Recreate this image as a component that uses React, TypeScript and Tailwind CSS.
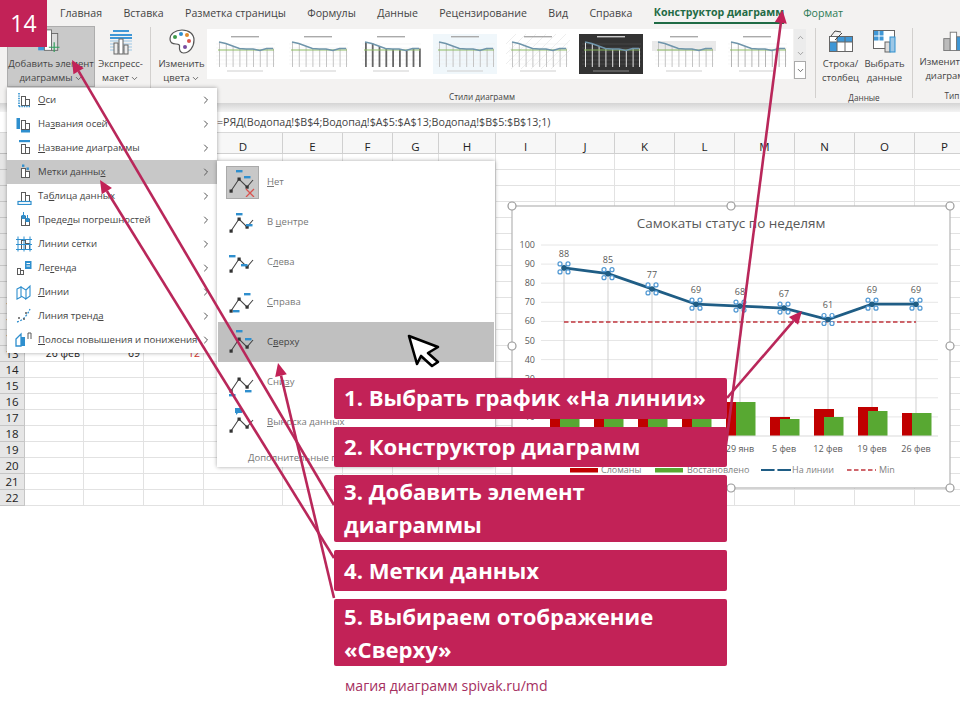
import { ChevronDown, ChevronRight, ChevronUp } from "lucide-react";

const BLUE = "#2f8fce";
const DARK = "#5a5a5a";

const tabs = ["Главная", "Вставка", "Разметка страницы", "Формулы", "Данные", "Рецензирование", "Вид", "Справка"];
const cols = ["A", "B", "C", "D", "E", "F", "G", "H", "I", "J", "K", "L", "M", "N", "O", "P"];
const rows = Array.from({ length: 22 }, (_, i) => i + 1);

function Bars() {
  return (
    <g fill="#fff" stroke={DARK} strokeWidth="1">
      <rect x="6.5" y="5.5" width="4" height="9" />
      <rect x="10.5" y="8.5" width="4" height="6" />
    </g>
  );
}

function MenuIcon({ kind }: { kind: number }) {
  return (
    <svg width="18" height="18" viewBox="0 0 18 18" fill="none">
      {kind !== 8 && kind !== 9 && kind !== 10 && kind !== 7 && <Bars />}
      {kind === 0 && (
        <g stroke={BLUE} strokeWidth="1.6" strokeDasharray="1.4 1">
          <path d="M4 2v14M4 15.5h12" />
        </g>
      )}
      {kind === 1 && (
        <g fill={BLUE}>
          <rect x="1.5" y="3" width="3.5" height="11" />
          <rect x="6" y="15" width="9" height="2.5" />
        </g>
      )}
      {kind === 2 && <rect x="4" y="1" width="11" height="2.2" fill={BLUE} />}
      {kind === 3 && (
        <g fill={BLUE}>
          <rect x="7" y="1.5" width="2.4" height="2.4" />
          <rect x="11.5" y="4.5" width="2.4" height="2.4" />
        </g>
      )}
      {kind === 4 && <rect x="3" y="14.5" width="13" height="3" fill="#fff" stroke={BLUE} strokeWidth="1.2" />}
      {kind === 5 && (
        <g fill={BLUE}>
          <rect x="6.5" y="4" width="4" height="4" />
          <rect x="10.5" y="7" width="4" height="4" />
          <path d="M8.5 1v4M12.5 4v4" stroke={BLUE} />
        </g>
      )}
      {kind === 6 && (
        <path d="M1 4.5h16M1 9.5h16M1 14.5h16M3 1.5v15M9 1.5v15M15 1.5v15" stroke={BLUE} strokeWidth="1" />
      )}
      {kind === 7 && (
        <g>
          <rect x="2.5" y="9.5" width="3" height="6" fill="#fff" stroke={DARK} />
          <rect x="5.5" y="11.5" width="3" height="4" fill="#fff" stroke={DARK} />
          <rect x="10" y="2" width="6.5" height="8" fill={BLUE} />
          <path d="M11.5 4.5h3.5M11.5 7h3.5" stroke="#fff" />
        </g>
      )}
      {kind === 8 && (
        <g stroke={BLUE} strokeWidth="1.1">
          <path d="M2 6l4-2v10l-4 2zM6 4l5 3v9l-5-3zM11 7l4-4v10l-4 3z" />
        </g>
      )}
      {kind === 9 && (
        <g>
          <path d="M2 15c5-1 10-6 13-13" stroke={BLUE} strokeWidth="1.3" strokeDasharray="2 1.5" />
          <g fill={DARK}>
            <circle cx="4" cy="11" r="1" />
            <circle cx="9" cy="12" r="1" />
            <circle cx="11" cy="6" r="1" />
          </g>
        </g>
      )}
      {kind === 10 && (
        <g>
          <path d="M1 8l5-5v12H1z" fill="#fff" stroke={BLUE} strokeWidth="1.3" />
          <rect x="6" y="6" width="4" height="9" fill={BLUE} />
          <path d="M13 8V2l3 0v6" stroke={DARK} strokeWidth="1" />
        </g>
      )}
    </svg>
  );
}

function LabelIcon({ kind }: { kind: number }) {
  const d: Record<number, number[][]> = {
    0: [[8, 3], [16, 9]],
    1: [[8, 6], [18, 17]],
    2: [[1, 8], [13, 17]],
    3: [[16, 6], [5, 23]],
    4: [[8, 3], [17, 11]],
    5: [[1, 27], [17, 23]],
    6: [],
  };
  return (
    <svg width="30" height="30" viewBox="0 0 30 30" fill="none">
      <polyline points="3,24 11,12 19,20 25,13" stroke="#444" strokeWidth="1.1" />
      <g fill="#333">
        <rect x="1.5" y="22.5" width="3.2" height="3.2" />
        <rect x="9.5" y="10.5" width="3.2" height="3.2" />
        <rect x="17.5" y="18.5" width="3.2" height="3.2" />
      </g>
      {d[kind].map((p, i) => (
        <rect key={i} x={p[0]} y={p[1]} width="6.5" height="2.4" fill={BLUE} />
      ))}
      {kind === 6 && <path d="M7 1h7v5h-4l-2 2v-2H7z" fill={BLUE} />}
      {kind === 0 && <path d="M18 22l8 8M26 22l-8 8" stroke="#d9534f" strokeWidth="1.3" />}
    </svg>
  );
}

const thumbs = [0, 0, 1, 2, 3, 4, 5, 6];

function Thumb({ v }: { v: number }) {
  const dark = v === 4;
  const bars = v === 1 ? "#666" : dark ? "#e4e4e4" : v === 6 ? "#b5b5b5" : "#c4c4c4";
  const xs = [6, 12.8, 19.6, 26.4, 33.2, 40, 46.8, 53.6, 60];
  const ys = [8, 9.5, 12, 14.5, 15, 15, 16.5, 14.5, 14.5];
  return (
    <svg width="64" height="40" viewBox="0 0 64 40" className="shrink-0 blur-[0.4px]">
      <rect width="64" height="40" fill={dark ? "#333" : v === 2 ? "#f0f7fb" : "#fff"} />
      {v === 3 && <path d="M0 10L10 0M0 20L20 0M0 30L30 0M5 35L40 0M15 35L50 0M25 35L60 0M35 35L64 6M45 35L64 16" stroke="#e6e6e6" strokeWidth="0.7" />}
      {v === 5 && <rect y="7" width="64" height="10" fill="#e9e9e9" />}
      {[10, 14, 18, 22, 26, 30].map((y) => (
        <path key={y} d={`M3 ${y}H62`} stroke={dark ? "#555" : "#f0f0f0"} strokeWidth="0.6" />
      ))}
      <rect x="18" y="2" width="28" height="1.4" fill={dark ? "#ccc" : "#aaa"} />
      {xs.map((x, i) => (
        <rect key={i} x={x} y={ys[i]} width={v === 1 ? 1.8 : 1} height={33 - ys[i]} fill={bars} />
      ))}
      <path d="M5 16H61" stroke="#8dbb62" strokeWidth="1" />
      <polyline points={xs.map((x, i) => `${x},${ys[i]}`).join(" ")} fill="none" stroke="#6f95ab" strokeWidth="1.5" />
      <rect x="14" y="36.5" width="36" height="1" fill={dark ? "#888" : "#cfcfcf"} />
    </svg>
  );
}

function Arrow({ x1, y1, x2, y2 }: { x1: number; y1: number; x2: number; y2: number }) {
  const len = Math.hypot(x2 - x1, y2 - y1);
  const ux = (x2 - x1) / len;
  const uy = (y2 - y1) / len;
  const bx = x2 - ux * 13;
  const by = y2 - uy * 13;
  const pts = `${x2},${y2} ${bx - uy * 6},${by + ux * 6} ${bx + uy * 6},${by - ux * 6}`;
  return (
    <g>
      <line x1={x1} y1={y1} x2={bx} y2={by} stroke="#b9275a" strokeWidth="2.6" />
      <polygon points={pts} fill="#c22257" />
    </g>
  );
}

const cats = [
  { x: 564, l: "1 янв", v: 88, r: 419, g: 419 },
  { x: 608, l: "8 янв", v: 85, r: 410, g: 410 },
  { x: 652, l: "15 янв", v: 77, r: 410, g: 410 },
  { x: 696, l: "22 янв", v: 69, r: 410, g: 410 },
  { x: 740, l: "29 янв", v: 68, r: 402, g: 402 },
  { x: 784, l: "5 фев", v: 67, r: 417, g: 419 },
  { x: 828, l: "12 фев", v: 61, r: 409, g: 417 },
  { x: 872, l: "19 фев", v: 69, r: 407, g: 411 },
  { x: 916, l: "26 фев", v: 69, r: 413, g: 413 },
];
const yv = (v: number) => 436 - 1.91 * v;

function Chart() {
  const handles = [
    [512, 206], [731, 206], [950, 206], [512, 346], [950, 346], [512, 488], [731, 488], [950, 488],
  ];
  return (
    <svg width="438" height="282" viewBox="512 206 438 282" className="overflow-visible" fontFamily="'Open Sans', sans-serif">
      <rect x="512" y="206" width="438" height="282" fill="#fff" stroke="#b5b5b5" strokeWidth="1.2" />
      <text x="731" y="227.5" textAnchor="middle" fontSize="13.5" fill="#595959">Самокаты статус по неделям</text>
      {Array.from({ length: 11 }, (_, k) => k).map((k) => (
        <g key={k}>
          {k > 0 && <line x1="541" x2="938" y1={yv(k * 10)} y2={yv(k * 10)} stroke="#e6e6e6" />}
          <text x="535" y={yv(k * 10) + 3} textAnchor="end" fontSize="9" fill="#595959">{k * 10}</text>
        </g>
      ))}
      {cats.map((c) => (
        <g key={c.x}>
          <rect x={c.x - 14} y={c.r} width="20" height={436 - c.r} fill="#c00000" />
          <rect x={c.x - 4} y={c.g} width="19.5" height={436 - c.g} fill="#58a832" />
          <line x1={c.x} x2={c.x} y1={yv(c.v)} y2={Math.min(c.r, c.g)} stroke="#cfcfcf" />
          <text x={c.x} y="452" textAnchor="middle" fontSize="9" fill="#595959">{c.l}</text>
        </g>
      ))}
      <line x1="541" x2="938" y1="436" y2="436" stroke="#d9d9d9" />
      <line x1="564" x2="916" y1="322" y2="322" stroke="#c0343c" strokeWidth="1.5" strokeDasharray="4.5 2.5" />
      <polyline points={cats.map((c) => `${c.x},${yv(c.v)}`).join(" ")} fill="none" stroke="#1f5d85" strokeWidth="2.8" />
      {cats.map((c) => (
        <g key={c.x}>
          <path d={`M${c.x - 4} ${yv(c.v) - 4}l8 8M${c.x + 4} ${yv(c.v) - 4}l-8 8`} stroke="#4f97d2" strokeWidth="1" />
          <circle cx={c.x} cy={yv(c.v)} r="2.8" fill="#1f5d85" />
          {[[-4, -4], [4, -4], [-4, 4], [4, 4]].map(([dx, dy], i) => (
            <circle key={i} cx={c.x + dx} cy={yv(c.v) + dy} r="2" fill="#fff" stroke="#4f97d2" strokeWidth="1.2" />
          ))}
          <text x={c.x} y={yv(c.v) - 11} textAnchor="middle" fontSize="9" fill="#595959">{c.v}</text>
        </g>
      ))}
      <rect x="570" y="468" width="28" height="4.5" fill="#c00000" />
      <text x="601" y="473" fontSize="9" fill="#7f7f7f">Сломаны</text>
      <rect x="655" y="468" width="28" height="4.5" fill="#58a832" />
      <text x="687" y="473" fontSize="9" fill="#7f7f7f">Востановлено</text>
      <line x1="761" x2="791" y1="470" y2="470" stroke="#1f5d85" strokeWidth="2" />
      <circle cx="776" cy="470" r="1.6" fill="#fff" />
      <text x="792" y="473" fontSize="9" fill="#7f7f7f">На линии</text>
      <line x1="847" x2="876" y1="470" y2="470" stroke="#c0343c" strokeWidth="1.5" strokeDasharray="4.5 2.5" />
      <text x="879" y="473" fontSize="9" fill="#7f7f7f">Min</text>
      {handles.map(([x, y]) => (
        <circle key={`${x}-${y}`} cx={x} cy={y} r="4" fill="#fff" stroke="#9a9a9a" strokeWidth="1.2" />
      ))}
    </svg>
  );
}

const menu1: [React.ReactNode, number][] = [
  [<><u>О</u>си</>, 0],
  [<>На<u>з</u>вания осей</>, 1],
  [<><u>Н</u>азвание диаграммы</>, 2],
  [<>Метки данны<u>х</u></>, 3],
  [<>Та<u>б</u>лица данных</>, 4],
  [<>Преде<u>л</u>ы погрешностей</>, 5],
  [<>Линии сетки</>, 6],
  [<>Ле<u>г</u>енда</>, 7],
  [<><u>Л</u>инии</>, 8],
  [<>Линия тренд<u>а</u></>, 9],
  [<><u>П</u>олосы повышения и понижения</>, 10],
];

const menu2: [React.ReactNode, number][] = [
  [<><u>Н</u>ет</>, 0],
  [<>В <u>ц</u>ентре</>, 1],
  [<>С<u>л</u>ева</>, 2],
  [<><u>С</u>права</>, 3],
  [<>С<u>в</u>ерху</>, 4],
  [<>Сни<u>з</u>у</>, 5],
  [<><u>В</u>ыноска данных</>, 6],
];

const callouts: [string, string][] = [
  ["1. Выбрать график «На линии»", "h-[41px] pt-[3px]"],
  ["2. Конструктор диаграмм", "h-[40px] pt-[3px]"],
  ["3. Добавить элемент диаграммы", "h-[67px] pt-0"],
  ["4. Метки данных", "h-[41px] pt-[4px]"],
  ["5. Выбираем отображение «Сверху»", "h-[67px] pt-px"],
];

export default function App() {
  return (
    <div className="relative w-[960px] h-[720px] overflow-hidden bg-white text-[#444] font-['Open_Sans',sans-serif]">
      {/* Ribbon */}
      <div className="h-[103px] bg-[#f3f2f1] overflow-hidden">
        <div className="h-[26px] flex items-start pl-[60px] gap-[21.4px] text-[10.6px] leading-[26px] whitespace-nowrap">
          {tabs.map((t) => (
            <span key={t}>{t}</span>
          ))}
          <span className="font-bold text-[#1f6b45] border-b-[2.5px] border-[#1f6b45] h-[24px] leading-[25px]">Конструктор диаграмм</span>
          <span className="text-[#2c7a55] -ml-[2.4px]">Формат</span>
        </div>
        <div className="flex h-[77px] text-[9.5px] leading-[14px] text-center whitespace-nowrap">
          <div className="ml-[7px] w-[88px] h-[61px] bg-[#c9c9c9] border border-[#adadad] flex flex-col items-center shrink-0">
            <svg width="27" height="24" viewBox="0 0 30 27" fill="none" className="mt-[2px] shrink-0">
              <rect x="0" y="14" width="7" height="10" fill="#3f97d6" />
              <rect x="7" y="1" width="8" height="23" fill="#fff" stroke="#666" />
              <rect x="15" y="5" width="7" height="19" fill="#ddd" stroke="#666" />
              <path d="M18 15v11M12 20.5h12" stroke="#2e9e5b" strokeWidth="1.3" />
            </svg>
            <span className="mt-[4px]">Добавить элемент</span>
            <span className="flex items-center gap-[1px]">диаграммы<ChevronDown size={9} /></span>
          </div>
          <div className="w-[51px] flex flex-col items-center shrink-0">
            <svg width="26" height="26" viewBox="0 0 26 26" fill="none" className="mt-[4px] shrink-0">
              <path d="M5 1h16M2 5h22M2 8h22" stroke="#3f97d6" strokeWidth="2" />
              <path d="M2 11h22M2 14h22M2 17h22M2 20h22" stroke="#9cc7e6" />
              <rect x="6" y="13" width="4" height="11" fill="#eee" stroke="#666" />
              <rect x="11" y="9" width="4" height="15" fill="#fff" stroke="#666" />
              <rect x="16" y="15" width="4" height="9" fill="#eee" stroke="#666" />
            </svg>
            <span className="mt-[1px]">Экспресс-</span>
            <span className="flex items-center gap-[1px]">макет<ChevronDown size={9} /></span>
          </div>
          <div className="ml-[4px] mr-[5px] w-px h-[66px] mt-[1px] bg-[#d2d0ce] shrink-0" />
          <div className="w-[51px] flex flex-col items-center shrink-0">
            <svg width="26" height="25" viewBox="0 0 26 25" fill="none" className="mt-[3px] shrink-0">
              <path d="M13 1C6 1 1 5 1 10c0 4 3 5 6 5 3 0 4 1 3.5 3-.5 3 1 6 4 6 6 0 10.5-6 10.5-13C25 5 20 1 13 1z" fill="#fff" stroke="#555" strokeWidth="1.2" />
              <circle cx="6" cy="8" r="2" fill="#3d9a4a" />
              <circle cx="12" cy="5" r="2" fill="#2f8fce" />
              <circle cx="18" cy="6" r="2" fill="#e08a2c" />
              <circle cx="20" cy="12" r="2" fill="#d9534f" />
              <circle cx="16" cy="18" r="2" fill="#7a4da0" />
            </svg>
            <span className="mt-[3px]">Изменить</span>
            <span className="flex items-center gap-[1px]">цвета<ChevronDown size={9} /></span>
          </div>
          <div className="w-[608px] shrink-0 flex flex-col items-center">
            <div className="w-full flex items-start">
              <div className="mt-[3px] w-[586px] h-[50px] bg-white flex items-center gap-[9.2px] pl-[6px] overflow-hidden">
                {thumbs.map((v, i) => (
                  <Thumb key={i} v={v} />
                ))}
              </div>
              <div className="mt-[3px] w-[13px] h-[50px] flex flex-col text-[#8a8a8a] border-l border-[#f3f2f1]">
                <div className="h-[16px] flex items-center justify-center bg-[#ececec]"><ChevronUp size={9} /></div>
                <div className="h-[16px] flex items-center justify-center bg-[#ececec]"><ChevronDown size={9} /></div>
                <div className="h-[18px] flex items-center justify-center bg-white border border-[#aaa] text-[#444]"><ChevronDown size={9} /></div>
              </div>
            </div>
            <span className="mt-[11px] text-[8.2px] leading-[14px] -translate-x-[29px]">Стили диаграмм</span>
          </div>
          <div className="w-px h-[70px] mt-[2px] bg-[#d2d0ce] shrink-0" />
          <div className="w-[96px] shrink-0 flex flex-col items-center">
            <div className="flex justify-center w-full pr-[3px]">
              <div className="w-[44px] flex flex-col items-center">
                <svg width="24" height="24" viewBox="0 0 24 24" fill="none" className="mt-[3px]">
                  <rect x="0.5" y="7.5" width="23" height="15" fill="#fff" stroke="#666" />
                  <rect x="8" y="8" width="15" height="5" fill="#3f97d6" />
                  <rect x="1" y="13" width="7" height="9" fill="#3f97d6" />
                  <path d="M8 8v14M16 8v14M1 13h22" stroke="#666" />
                  <path d="M2 7l4-5 6 1M6 11l7-7" stroke="#444" strokeWidth="1" />
                </svg>
                <span className="mt-[4px]">Строка/</span>
                <span>столбец</span>
              </div>
              <div className="w-[44px] flex flex-col items-center">
                <svg width="24" height="24" viewBox="0 0 24 24" fill="none" className="mt-[3px]">
                  <rect x="0.5" y="1.5" width="21" height="18" fill="#fff" stroke="#666" />
                  <rect x="1" y="2" width="10" height="10" fill="#3f97d6" />
                  <path d="M6 2v17M11 2v17M1 7h20M1 12h20" stroke="#fff" />
                  <rect x="12" y="13" width="5" height="10" fill="#ddd" stroke="#666" />
                  <rect x="17" y="8" width="5" height="15" fill="#9cc7e6" stroke="#2f8fce" />
                </svg>
                <span className="mt-[4px]">Выбрать</span>
                <span>данные</span>
              </div>
            </div>
            <span className="mt-[6px] text-[8.2px]">Данные</span>
          </div>
          <div className="w-px h-[70px] mt-[2px] bg-[#d2d0ce] shrink-0" />
          <div className="w-[70px] shrink-0 pl-[8px] flex flex-col items-center">
            <svg width="32" height="24" viewBox="0 0 32 24" fill="none" className="mt-[3px] translate-x-[6px]">
              <rect x="0.5" y="10.5" width="7" height="13" fill="#bbb" stroke="#777" />
              <rect x="7.5" y="3.5" width="7" height="20" fill="#fff" stroke="#777" />
              <rect x="14.5" y="8.5" width="7" height="15" fill="#3f97d6" stroke="#777" />
            </svg>
            <span className="mt-[4px]">Изменить тип</span>
            <span>диаграммы</span>
            <span className="mt-[6px] text-[8.2px]">Тип</span>
          </div>
        </div>
      </div>
      <div className="h-[9px] bg-gradient-to-b from-[#d4d4d4] to-[#f4f4f4]" />
      {/* Formula bar */}
      <div className="h-[21px] bg-white border-b border-[#d9d9d9] pl-[217px] text-[10.7px] leading-[20px] whitespace-nowrap">
        =РЯД(Водопад!$B$4;Водопад!$A$5:$A$13;Водопад!$B$5:$B$13;1)
      </div>
      {/* Sheet */}
      <div className="grid grid-cols-[25px_59px_60px_60px_79px_60px_50px_46px_57px_60px_59px_60px_60px_60px_60px_60px_60px] grid-rows-[21px_repeat(22,16px)] text-[#222]">
        <div className="bg-[#ececec] border-b border-[#bdbdbd]" />
        {cols.map((c) => (
          <div key={c} className="bg-[#f7f7f7] border-r border-b border-[#d0d0d0] text-center text-[11.5px] font-medium leading-[27px] overflow-hidden">{c}</div>
        ))}
        {rows.map((r) => (
          <div key={r} className="contents">
            <div className="bg-[#e6e6e6] border-b border-r border-[#c6c6c6] text-center text-[11.5px] leading-[15px]">{r}</div>
            {cols.map((c) => (
              <div key={c} className="border-r border-b border-[#e2e2e2] text-right pr-[3px] text-[10.5px] leading-[15px] whitespace-nowrap">
                {r === 13 && c === "A" && "26 фев"}
                {r === 13 && c === "B" && "69"}
                {r === 13 && c === "C" && <span className="text-[#d0342c]">12</span>}
              </div>
            ))}
          </div>
        ))}
      </div>
      {/* Chart, over the sheet */}
      <div className="absolute left-[512px] top-[206px]">
        <Chart />
      </div>
      {/* Chart-elements menu */}
      <div className="absolute left-[7px] top-[88px] w-[210px] h-[265px] bg-white shadow-[0_0_4px_rgba(0,0,0,0.35)] text-[9.6px] whitespace-nowrap">
        {menu1.map(([label, kind], i) => (
          <div key={i} className={`h-[24px] flex items-center pr-[5px] ${i === 3 ? "bg-[#c8c8c8]" : ""}`}>
            <div className="w-[31px] flex justify-center shrink-0 pl-[2px]">
              <MenuIcon kind={kind} />
            </div>
            <span>{label}</span>
            <ChevronRight size={12} className="ml-auto text-[#555]" />
          </div>
        ))}
      </div>
      {/* Data-labels submenu */}
      <div className="absolute left-[217px] top-[161px] w-[278px] h-[306px] pt-px px-px bg-white shadow-[0_0_4px_rgba(0,0,0,0.35)] text-[9.5px] text-[#777] whitespace-nowrap">
        {menu2.map(([label, kind], i) => (
          <div key={i} className={`h-[40px] flex items-center ${i === 4 ? "bg-[#c0c0c0] text-[#444]" : ""}`}>
            <div className={`ml-[8px] w-[33px] h-[33px] flex items-center justify-center shrink-0 ${i === 0 ? "bg-[#c8c8c8] border border-[#aaa]" : ""}`}>
              <LabelIcon kind={kind} />
            </div>
            <span className="ml-[8px]">{label}</span>
          </div>
        ))}
        <div className="pl-[30px] h-[24px] leading-[24px] mt-[4px]">Дополнительные параметры меток данных...</div>
      </div>
      {/* Mouse pointer */}
      <svg width="40" height="40" viewBox="405 332 40 40" className="absolute left-[405px] top-[332px]">
        <polygon points="409,336 438,347 428,353 438,362 432,366 421,356 417,364" fill="#fff" stroke="#000" strokeWidth="2.6" strokeLinejoin="round" />
      </svg>
      {/* Arrows */}
      <svg width="960" height="720" viewBox="0 0 960 720" className="absolute left-0 top-0 pointer-events-none">
        <Arrow x1={334} y1={505} x2={72} y2={60} />
        <Arrow x1={334} y1={558} x2={100} y2={180} />
        <Arrow x1={334} y1={598} x2={278} y2={363} />
        <Arrow x1={727} y1={398} x2={802} y2={311} />
        <Arrow x1={726} y1={445} x2={782.5} y2={10} />
      </svg>
      {/* Slide number */}
      <div className="absolute left-0 top-0 w-[47px] h-[47px] bg-[#c22257] text-white text-[23px] leading-[47px] text-center">14</div>
      {/* Callouts */}
      <div className="absolute left-[334px] top-[378px] w-[393px] flex flex-col gap-[8px]">
        {callouts.map(([t, h]) => (
          <div key={t} className={`${h} rounded-[2px] bg-[#c22257] text-white font-bold text-[22.1px] leading-[33px] px-[10px]`}>{t}</div>
        ))}
        <div className="pl-[11px] text-[14.1px] text-[#a5305f] leading-[18px] mt-[3px]">магия диаграмм spivak.ru/md</div>
      </div>
    </div>
  );
}
